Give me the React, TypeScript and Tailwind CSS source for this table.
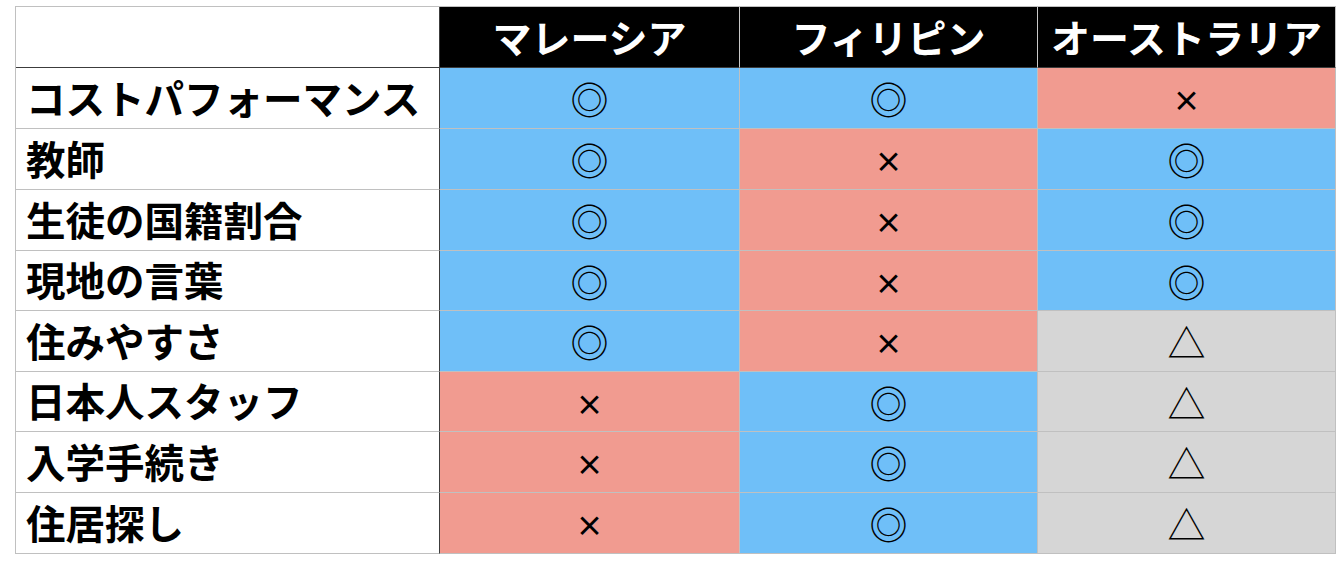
import React from 'react';

type Mark = '◎' | '×' | '△';

const rows: { label: string; marks: Mark[]; h: string }[] = [
  { label: 'コストパフォーマンス', marks: ['◎', '◎', '×'], h: 'h-[61px]' },
  { label: '教師', marks: ['◎', '×', '◎'], h: 'h-[61px]' },
  { label: '生徒の国籍割合', marks: ['◎', '×', '◎'], h: 'h-[61px]' },
  { label: '現地の言葉', marks: ['◎', '×', '◎'], h: 'h-[60px]' },
  { label: '住みやすさ', marks: ['◎', '×', '△'], h: 'h-[61px]' },
  { label: '日本人スタッフ', marks: ['×', '◎', '△'], h: 'h-[60px]' },
  { label: '入学手続き', marks: ['×', '◎', '△'], h: 'h-[61px]' },
  { label: '住居探し', marks: ['×', '◎', '△'], h: 'h-[61px]' },
];

const countries = ['マレーシア', 'フィリピン', 'オーストラリア'];

const widths = ['w-[300px]', 'w-[298px]', 'w-[298px]'];

const markBg: Record<Mark, string> = {
  '◎': 'bg-[#6fbff8]',
  '×': 'bg-[#f19b90]',
  '△': 'bg-[#d6d6d6]',
};

// × sits smaller and a bit heavier in the original
const markText: Record<Mark, string> = {
  '◎': 'text-[38px]',
  '×': 'text-[28px] font-bold pt-[4px]',
  '△': 'text-[38px]',
};

export default function App() {
  return (
    <div
      className="w-[1344px] h-[566px] bg-white pt-[6px] pl-[15px]"
      style={{ fontFamily: '"Noto Sans CJK JP", "Noto Sans", sans-serif' }}
    >
      <div className="inline-flex flex-col border-t border-l border-[#c0c0c0]">
        {/* header */}
        <div className="flex h-[61px]">
          <div className="w-[424px] border-r border-b border-r-[#3c3c3c] border-b-[#3c3c3c] bg-white" />
          {countries.map((c, i) => (
            <div
              key={c}
              className={`${widths[i]} flex items-center justify-center bg-black text-white text-[39px] font-bold leading-none border-b border-b-[#3c3c3c] ${
                i < 2 ? 'border-r border-r-[#c8c8c8]' : 'border-r border-r-[#c0c0c0]'
              }`}
            >
              <span className="-mt-[2px]">{c}</span>
            </div>
          ))}
        </div>

        {rows.map((row) => (
          <div key={row.label} className={`flex ${row.h}`}>
            <div className="w-[424px] flex items-center pl-[10px] border-r border-b border-r-[#3c3c3c] border-b-[#c0c0c0] text-[39.5px] font-bold leading-none text-black">
              <span className="-mt-[3px]">{row.label}</span>
            </div>
            {row.marks.map((m, i) => (
              <div
                key={i}
                className={`${widths[i]} ${markBg[m]} flex items-center justify-center border-r border-b border-[#c0c0c0] leading-none text-black`}
              >
                <span className={markText[m]}>{m}</span>
              </div>
            ))}
          </div>
        ))}
      </div>
    </div>
  );
}
